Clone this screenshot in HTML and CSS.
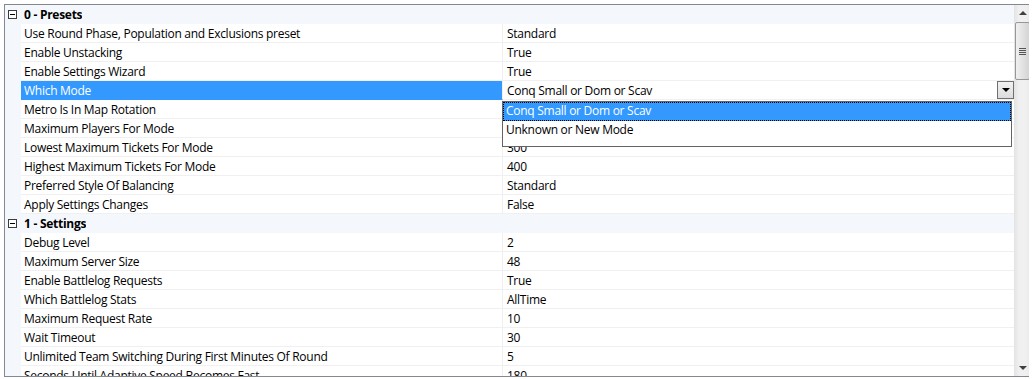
FILE: index.html
```html
<!DOCTYPE html>
<html lang="en">
<head>
  <meta charset="UTF-8">
  <title>Settings</title>
  <link rel="stylesheet" href="styles.css">
</head>
<body>
  <div class="grid">
    <div class="rows">
      <div class="row cat"><span class="gutter"><span class="box"></span></span><span class="name">0 - Presets</span></div>
      <div class="row"><span class="gutter"></span><span class="name">Use Round Phase, Population and Exclusions preset</span><span class="value">Standard</span></div>
      <div class="row"><span class="gutter"></span><span class="name">Enable Unstacking</span><span class="value">True</span></div>
      <div class="row"><span class="gutter"></span><span class="name">Enable Settings Wizard</span><span class="value">True</span></div>
      <div class="row sel"><span class="gutter"></span><span class="name">Which Mode</span><span class="value">Conq Small or Dom or Scav<span class="drop"></span></span></div>
      <div class="row"><span class="gutter"></span><span class="name">Metro Is In Map Rotation</span><span class="value">True</span></div>
      <div class="row"><span class="gutter"></span><span class="name">Maximum Players For Mode</span><span class="value">64</span></div>
      <div class="row"><span class="gutter"></span><span class="name">Lowest Maximum Tickets For Mode</span><span class="value">300</span></div>
      <div class="row"><span class="gutter"></span><span class="name">Highest Maximum Tickets For Mode</span><span class="value">400</span></div>
      <div class="row"><span class="gutter"></span><span class="name">Preferred Style Of Balancing</span><span class="value">Standard</span></div>
      <div class="row"><span class="gutter"></span><span class="name">Apply Settings Changes</span><span class="value">False</span></div>
      <div class="row cat"><span class="gutter"><span class="box"></span></span><span class="name">1 - Settings</span></div>
      <div class="row"><span class="gutter"></span><span class="name">Debug Level</span><span class="value">2</span></div>
      <div class="row"><span class="gutter"></span><span class="name">Maximum Server Size</span><span class="value">48</span></div>
      <div class="row"><span class="gutter"></span><span class="name">Enable Battlelog Requests</span><span class="value">True</span></div>
      <div class="row"><span class="gutter"></span><span class="name">Which Battlelog Stats</span><span class="value">AllTime</span></div>
      <div class="row"><span class="gutter"></span><span class="name">Maximum Request Rate</span><span class="value">10</span></div>
      <div class="row"><span class="gutter"></span><span class="name">Wait Timeout</span><span class="value">30</span></div>
      <div class="row"><span class="gutter"></span><span class="name">Unlimited Team Switching During First Minutes Of Round</span><span class="value">5</span></div>
      <div class="row"><span class="gutter"></span><span class="name">Seconds Until Adaptive Speed Becomes Fast</span><span class="value">180</span></div>

      <div class="list">
        <div class="item on">Conq Small or Dom or Scav</div>
        <div class="item">Unknown or New Mode</div>
      </div>
    </div>
    <div class="scroll">
      <div class="arrow up"></div>
      <div class="thumb"><span class="grip"></span></div>
      <div class="track"></div>
      <div class="arrow down"></div>
    </div>
  </div>
</body>
</html>
```

FILE: styles.css
```css
body{
  margin: 4px;
  background: #fff;
  font-family: "Open Sans", "Noto Sans", sans-serif;
  font-size: 12px;
  letter-spacing: -0.27px;
  color: #000;
}
.grid{
  width: 1026px;
  height: 371px;
  border: 1px solid #828790;
  display: flex;
  overflow: hidden;
}
.rows{
  flex: 1;
  position: relative;
  overflow: hidden;
}
.row{
  display: flex;
  height: 19px;
  line-height: 18px;
  white-space: nowrap;
}
.gutter{
  width: 16px;
  flex: none;
  background: #f4f7fc;
}
.name{
  width: 478px;
  flex: none;
  padding-left: 3px;
  padding-top: 1px;
  border-bottom: 1px solid #f0f0f0;
  border-right: 1px solid #f0f0f0;
  overflow: hidden;
}
.value{
  flex: 1;
  padding-left: 4px;
  padding-top: 1px;
  border-bottom: 1px solid #f0f0f0;
  position: relative;
}
.cat{
  background: #f4f7fc;
  font-weight: bold;
}
.cat .name{
  border: none;
  width: auto;
}
.box{
  display: block;
  position: relative;
  width: 7px;
  height: 7px;
  border: 1px solid #3c3c3c;
  background: #fff;
  margin: 5px 0 0 3px;
}
.box::after{
  content: "";
  position: absolute;
  left: 1px;
  top: 3px;
  width: 5px;
  height: 1px;
  background: #000;
}
.sel .name{
  background: #3399ff;
  color: #fff;
  border-bottom-color: #3399ff;
}
.drop{
  position: absolute;
  right: 0;
  top: 0;
  width: 15px;
  height: 16px;
  border: 1px solid #707070;
  background: linear-gradient(#f2f2f2, #dcdcdc);
}
.drop::after{
  content: "";
  position: absolute;
  left: 4px;
  top: 6px;
  border-left: 4px solid transparent;
  border-right: 4px solid transparent;
  border-top: 4px solid #000;
}
.list{
  position: absolute;
  left: 497px;
  top: 96px;
  width: 508px;
  height: 44px;
  border: 1px solid #646464;
  background: #fff;
}
.item{
  height: 19px;
  line-height: 18px;
  padding-left: 3px;
  white-space: nowrap;
}
.item.on{
  background: #3399ff;
  color: #fff;
  outline: 1px dotted #000;
  outline-offset: -1px;
}
.scroll{
  width: 17px;
  flex: none;
  background: linear-gradient(90deg, #e3e3e3, #f0f0f0 30%, #f0f0f0 70%, #e8e8e8);
  display: flex;
  flex-direction: column;
}
.arrow{
  height: 17px;
  flex: none;
  position: relative;
}
.arrow::after{
  content: "";
  position: absolute;
  left: 5px;
  border-left: 4px solid transparent;
  border-right: 4px solid transparent;
}
.up::after{
  top: 6px;
  border-bottom: 4px solid #404040;
}
.down::after{
  top: 7px;
  border-top: 4px solid #404040;
}
.thumb{
  height: 56px;
  margin: 0 1px;
  border: 1px solid #979797;
  border-radius: 2px;
  background: linear-gradient(90deg, #f0f0f0, #e2e2e2 50%, #d4d4d4);
  display: flex;
  align-items: center;
  justify-content: center;
}
.grip{
  width: 7px;
  height: 7px;
  background: repeating-linear-gradient(#555 0 1px, transparent 1px 2px);
}
.track{
  flex: 1;
}
```
